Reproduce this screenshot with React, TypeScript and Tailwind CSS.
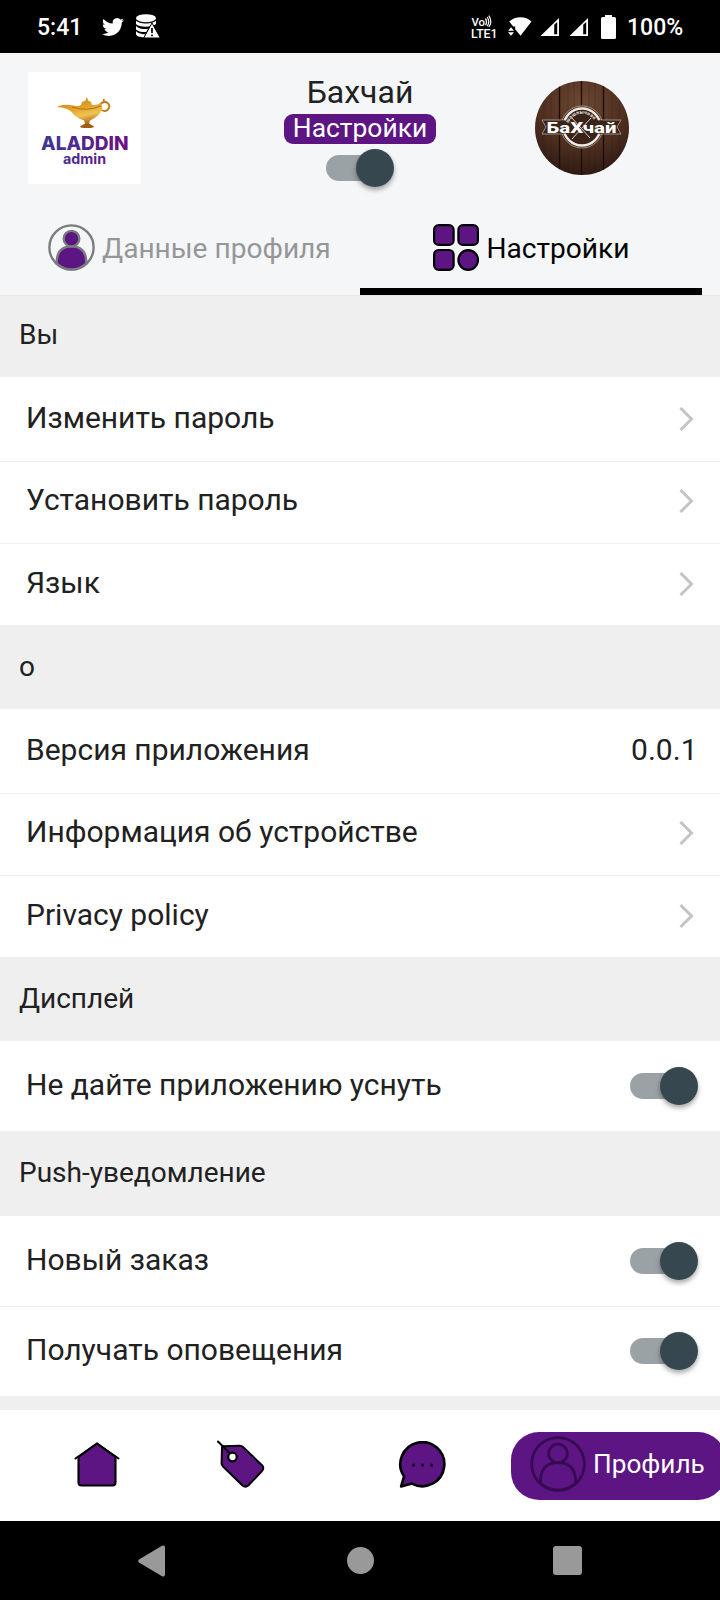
import type { ReactNode } from "react";

const PURPLE = "#5c1583";

function StatusBar() {
  return (
    <div className="flex h-[53px] items-center bg-black text-white">
      <span className="ml-[37px] w-[65px] shrink-0 pt-[2px] text-[23px] leading-none font-medium">5:41</span>
      <svg className="h-[22px] w-[22px] shrink-0" viewBox="0 0 24 24" fill="#fff">
        <path d="M23.953 4.57a10 10 0 01-2.825.775 4.958 4.958 0 002.163-2.723c-.951.555-2.005.959-3.127 1.184a4.92 4.92 0 00-8.384 4.482C7.69 8.095 4.067 6.13 1.64 3.162a4.822 4.822 0 00-.666 2.475c0 1.71.87 3.213 2.188 4.096a4.904 4.904 0 01-2.228-.616v.06a4.923 4.923 0 003.946 4.827 4.996 4.996 0 01-2.212.085 4.936 4.936 0 004.604 3.417 9.867 9.867 0 01-6.102 2.105c-.39 0-.779-.023-1.17-.067a13.995 13.995 0 007.557 2.209c9.053 0 13.998-7.496 13.998-13.985 0-.21 0-.42-.015-.63A9.935 9.935 0 0024 4.59z" />
      </svg>
      <svg className="ml-[11px] h-[25px] w-[25px] shrink-0" viewBox="0 0 25 25">
        <ellipse cx="11" cy="4.2" rx="10" ry="4" fill="#fff" />
        <path d="M1 6.5 C4 10.5 18 10.5 21 6.5 V10 C17 13.5 4 13.5 1 10Z M1 12 C4 15.2 10 15.3 13 14.8 L11.3 18 C7 18.3 3 17.4 1 15.5Z M1 17.3 C4 20 7 20.3 10.5 20.2 L9 23.3 C5 23.3 1 22 1 20Z" fill="#fff" />
        <path d="M17 9 L25.3 24 H8.7Z" fill="#fff" stroke="#000" strokeWidth="1" />
        <path d="M17 14v5M17 20.6v1.6" stroke="#000" strokeWidth="1.7" />
      </svg>
      <svg className="ml-auto h-[30px] w-[28px] shrink-0" viewBox="0 0 28 30" fill="#fff">
        <text x="1.5" y="14" fontSize="11" fontWeight="500" textLength="13.5" lengthAdjust="spacingAndGlyphs">Vo</text>
        <text x="1" y="25.5" fontSize="13.5" fontWeight="500" textLength="26.5" lengthAdjust="spacingAndGlyphs">LTE1</text>
        <path d="M15.5 6.5q2 3.4 0 6.8M17.2 5q3 4.6 0 9.3M18.8 3.6q4 6.2 0 11.4" fill="none" stroke="#fff" strokeWidth="1.2" />
      </svg>
      <svg className="ml-[10px] h-[20px] w-[24px] shrink-0" viewBox="0 0 24 20" fill="#fff">
        <path d="M1.2 4.6 C7-1.2 18-1.2 23.5 4.6 L12.5 18.8 L7.2 12.2 V9.6 H5.2Z" />
        <path d="M0 13.8 L3 10.2 L6 13.8Z M0 15.2 H6 L3 18.8Z" />
      </svg>
      <div className="ml-[8px] flex gap-[9px]">
        {[0, 1].map((n) => (
          <svg key={n} className="h-[18px] w-[20px] shrink-0" viewBox="0 0 20 18">
            <path d="M0.5 18 L19 0 V18Z" fill="#fff" />
            <path d="M14.2 6.8 L17.2 4 V16.2 H14.2Z" fill="#000" />
          </svg>
        ))}
      </div>
      <svg className="ml-[12px] h-[24px] w-[15px] shrink-0" viewBox="0 0 15 24" fill="#fff">
        <path d="M4 0h7v2.5H4z" />
        <rect y="2" width="15" height="22" rx="1.5" />
      </svg>
      <span className="ml-[11px] w-[93px] shrink-0 pt-[2px] text-[23px] leading-none font-medium">100%</span>
    </div>
  );
}

function Toggle() {
  return (
    <div className="flex h-[38px] w-[68px] items-center">
      <div className="flex h-[26px] w-[60px] items-center rounded-full bg-[#9aa2a5]">
        <div className="ml-[30px] h-[38px] w-[38px] shrink-0 rounded-full bg-[#37474f] shadow-[0_3px_5px_rgba(0,0,0,0.35)]" />
      </div>
    </div>
  );
}

function AladdinLogo() {
  return (
    <svg className="h-[112px] w-[113px] bg-white" viewBox="0 0 113 112">
      <defs>
        <linearGradient id="gold" x1="0" y1="0" x2="0.3" y2="1">
          <stop offset="0" stopColor="#c98016" />
          <stop offset="0.45" stopColor="#e0a22c" />
          <stop offset="0.7" stopColor="#efc452" />
          <stop offset="1" stopColor="#a35c0e" />
        </linearGradient>
        <linearGradient id="brand" x1="14" y1="0" x2="100" y2="0" gradientUnits="userSpaceOnUse">
          <stop offset="0" stopColor="#3b3a92" />
          <stop offset="1" stopColor="#6d1083" />
        </linearGradient>
      </defs>
      <path d="M71.5 33 Q75 28.5 79 30.5 Q83.5 34 79.5 38 Q77 40 73.5 38" fill="none" stroke="#c27f18" strokeWidth="2" />
      <path d="M75.8 30.5 V27" stroke="#c27f18" strokeWidth="1.8" />
      <path d="M30 34.3 Q37 32 44 33.3 Q50 35 53 33 L54 30 L57.5 28.5 L58.8 25 L60.2 28.5 L63 30 L64 33 Q69 33.5 73 31 L74.5 36 Q72 44 62 48.5 L61 51.5 L66 54.5 Q66 56 59 56 Q52 56 52 54.5 L57 51.5 L56 48.5 Q48 46 43 39.5 Q38 35.5 30 35.3Z" fill="url(#gold)" />
      <path d="M44 35 Q58 40 73 34" fill="none" stroke="#ad6a10" strokeWidth="0.9" />
      <text x="13" y="78" textLength="87.5" lengthAdjust="spacingAndGlyphs" fontFamily="Inter, sans-serif" fontSize="19.3" fontWeight="800" fill="url(#brand)">ALADDIN</text>
      <text x="35" y="92" textLength="43" lengthAdjust="spacingAndGlyphs" fontFamily="Inter, sans-serif" fontSize="14.5" fontWeight="700" fill="url(#brand)">admin</text>
    </svg>
  );
}

function Avatar() {
  return (
    <svg className="h-[94px] w-[94px] rounded-full" viewBox="0 0 94 94">
      <defs>
        <radialGradient id="wood" cx="0.5" cy="0.25" r="0.75">
          <stop offset="0" stopColor="#6f4833" />
          <stop offset="0.6" stopColor="#4f3021" />
          <stop offset="1" stopColor="#301c13" />
        </radialGradient>
        <path id="arc" d="M33.5 42 A14.5 14.5 0 0 1 60.5 42" />
      </defs>
      <rect width="94" height="94" fill="url(#wood)" />
      <path d="M24.5 0V94M46.5 0V94M68.5 0V94" stroke="#1d100b" strokeWidth="1.4" />
      <path d="M9 0V94M16 0V94M33 0V94M39 0V94M54 0V94M60 0V94M77 0V94M84 0V94" stroke="#2d1a10" strokeWidth="0.8" opacity="0.35" />
      <circle cx="47" cy="46" r="21" fill="#3a241a" stroke="#b7a79b" strokeWidth="0.8" />
      <circle cx="47" cy="46" r="18.5" fill="none" stroke="#efe9e3" strokeWidth="2.4" />
      <path d="M7 39 H29 V53 H7 L11 46Z M86 39 H64 V53 H86 L82 46Z" fill="#3a241a" stroke="#b7a79b" strokeWidth="0.8" />
      <rect x="26" y="39.5" width="42" height="13" fill="#3a241a" />
      <path d="M37 37 L55 57 M56 37 L37 58" stroke="#d9cfc6" strokeWidth="1" />
      <text fontSize="5" fontWeight="700" fill="#efe9e3">
        <textPath href="#arc" textLength="31">шашлычная</textPath>
      </text>
      <text x="11.5" y="51.8" textLength="70" lengthAdjust="spacingAndGlyphs" fontSize="15" fontWeight="800" fill="#fff">БаХчай</text>
    </svg>
  );
}

function ProfileIcon({ className, fill, stroke }: { className: string; fill: string; stroke: string }) {
  return (
    <svg className={className} viewBox="0 0 48 48" stroke={stroke} strokeWidth="2.4">
      <circle cx="24" cy="24" r="22.6" fill="none" />
      <path d="M9 40.5 V37 Q10 22.8 24 22.8 Q38 22.8 39 37 V40.5 Q32 46.4 24 46.4 Q16 46.4 9 40.5Z" fill={fill} />
      <circle cx="24" cy="15" r="8" fill={fill} />
    </svg>
  );
}

function GridIcon() {
  return (
    <svg className="h-[47px] w-[46px]" viewBox="0 0 46 47" fill={PURPLE} stroke="#000" strokeWidth="2.2">
      <rect x="1.1" y="1.1" width="19.5" height="19.8" rx="4.5" />
      <rect x="25.4" y="1.1" width="19.5" height="19.8" rx="4.5" />
      <rect x="1.1" y="26" width="19.5" height="19.8" rx="4.5" />
      <circle cx="35.2" cy="36" r="9.8" />
    </svg>
  );
}

function Header() {
  return (
    <header className="h-[242px] bg-[#f5f6f8]">
      <div className="flex h-[147px] items-start">
        <div className="mt-[19px] ml-[28px]">
          <AladdinLogo />
        </div>
        <div className="ml-[119px] flex w-[200px] flex-col items-center pt-[21px]">
          <h1 className="text-[32px] leading-[36px] text-[#212121]">Бахчай</h1>
          <span className="mt-[4px] flex h-[30px] w-[152px] items-center justify-center rounded-[9px] bg-[#5c1583] pb-[2px] text-[26.4px] leading-none text-white">
            Настройки
          </span>
          <div className="mt-[5px]">
            <Toggle />
          </div>
        </div>
        <div className="mt-[28px] ml-[75px]">
          <Avatar />
        </div>
      </div>
      <nav className="flex h-[95px] px-[18px] text-[28.1px]">
        <div className="flex w-[342px] pl-[30px]">
          <ProfileIcon className="mt-[24px] h-[47px] w-[47px]" fill={PURPLE} stroke="#7b7b7d" />
          <span className="mt-[33px] ml-[7px] leading-[32px] text-[#959697]">Данные профиля</span>
        </div>
        <div className="flex w-[342px] border-b-[7px] border-black pl-[73px]">
          <div className="mt-[24px]">
            <GridIcon />
          </div>
          <span className="mt-[33px] ml-[7.5px] leading-[32px] text-black">Настройки</span>
        </div>
      </nav>
    </header>
  );
}

function Section({ className, children }: { className: string; children?: ReactNode }) {
  return (
    <h2 className={`flex items-center bg-[#efefef] pl-[19px] text-[28px] leading-none text-[#212121] ${className}`}>
      {children}
    </h2>
  );
}

function Row({ label, className, right }: { label: string; className: string; right: ReactNode }) {
  return (
    <div className={`flex items-center justify-between border-[#efefef] bg-white pl-[26px] text-[30px] leading-none text-[#212121] ${className}`}>
      <span className="pb-[2px]">{label}</span>
      {right}
    </div>
  );
}

function Chevron() {
  return (
    <svg className="mr-[26px] h-[24px] w-[15px]" viewBox="0 0 15 24" fill="none" stroke="#c4c4c4" strokeWidth="3">
      <path d="M1.5 1 L12.5 12 L1.5 23" />
    </svg>
  );
}

function RowToggle() {
  return (
    <div className="mr-[22px]">
      <Toggle />
    </div>
  );
}

function BottomNav() {
  return (
    <nav className="flex h-[111px] items-start overflow-hidden bg-white">
      <svg className="mt-[31px] ml-[73px] h-[48px] w-[48px] shrink-0" viewBox="0 0 48 48" fill={PURPLE} stroke="#000" strokeWidth="2.1" strokeLinecap="round" strokeLinejoin="round">
        <path d="M5.5 16 L24 2.5 L42.5 16 V41.5 Q42.5 44.5 39.5 44.5 H8.5 Q5.5 44.5 5.5 41.5Z" />
        <path d="M2.5 17.5 L24 2.5 L45.5 17.5" fill="none" />
      </svg>
      <svg className="mt-[30px] ml-[95px] h-[50px] w-[50px] shrink-0" viewBox="0 0 50 50" fill={PURPLE} stroke="#000" strokeWidth="2" strokeLinecap="round" strokeLinejoin="round">
        <path d="M7 6.2 L23.5 5.7 Q25.5 5.6 27 7 L46 25.2 Q48.5 28 46 31 L32.5 45.3 Q29.5 48 26.5 45.5 L7 26.5 Q5.5 25 5.6 23 L6 7Z" />
        <path d="M2 1.5 L14 13.5" />
        <circle cx="16.5" cy="17" r="4.3" fill="#fff" strokeWidth="2.3" />
      </svg>
      <svg className="mt-[31px] ml-[132px] h-[48px] w-[48px] shrink-0" viewBox="0 0 48 48" fill={PURPLE} stroke="#000" strokeWidth="2.6" strokeLinejoin="round">
        <path d="M6.1 35.5 A22 22 0 1 1 14 42.6 L3.1 45.4Z" />
        <path d="M15.5 22.8v2.8M24.5 22.8v2.8M33.5 22.8v2.8" strokeWidth="2.4" />
      </svg>
      <div className="mt-[22px] ml-[65px] flex h-[68px] w-[215px] shrink-0 items-center rounded-[28px] bg-[#5c1583] pl-[19px]">
        <ProfileIcon className="mb-[4px] h-[56px] w-[56px] shrink-0" fill="none" stroke="#380a54" />
        <span className="ml-[7px] pb-[3px] text-[26.2px] leading-none text-white">Профиль</span>
      </div>
    </nav>
  );
}

function SystemNav() {
  return (
    <div className="flex h-[79px] items-center justify-between bg-black pr-[138px] pl-[138px]">
      <svg className="h-[32px] w-[29px]" viewBox="0 0 29 32" fill="#999">
        <path d="M1 14.5 L24 0.8 Q27-0.5 27 2.5 V29.5 Q27 32.5 24 31.2 L1 17.5 Q-0.6 16 1 14.5Z" />
      </svg>
      <div className="h-[27px] w-[27px] rounded-full bg-[#999]" />
      <div className="h-[29px] w-[29px] rounded-[3px] bg-[#999]" />
    </div>
  );
}

export default function App() {
  return (
    <div className="flex h-[1600px] w-[720px] flex-col overflow-hidden bg-white font-[Roboto,sans-serif]">
      <StatusBar />
      <Header />
      <main className="h-[1115px] bg-[#efefef]">
        <Section className="h-[82px] border-t border-[#e8e8e8] pb-[3px]">Вы</Section>
        <Row className="h-[85px] border-b" label="Изменить пароль" right={<Chevron />} />
        <Row className="h-[82px] border-b pb-[4px]" label="Установить пароль" right={<Chevron />} />
        <Row className="h-[81px] pb-[2px]" label="Язык" right={<Chevron />} />
        <Section className="h-[84px]">о</Section>
        <Row className="h-[85px] border-b" label="Версия приложения" right={<span className="mr-[22.5px] pb-[2px]">0.0.1</span>} />
        <Row className="h-[82px] border-b pb-[4px]" label="Информация об устройстве" right={<Chevron />} />
        <Row className="h-[81px] pb-[2px]" label="Privacy policy" right={<Chevron />} />
        <Section className="h-[84px]">Дисплей</Section>
        <Row className="h-[90px]" label="Не дайте приложению уснуть" right={<RowToggle />} />
        <Section className="h-[85px] pb-[2px]">Push-уведомление</Section>
        <Row className="h-[91px] border-b" label="Новый заказ" right={<RowToggle />} />
        <Row className="h-[89px] pb-[2px]" label="Получать оповещения" right={<RowToggle />} />
      </main>
      <BottomNav />
      <SystemNav />
    </div>
  );
}
